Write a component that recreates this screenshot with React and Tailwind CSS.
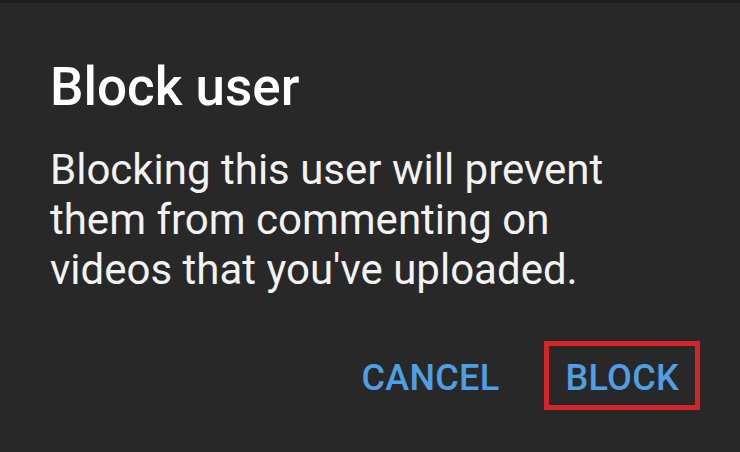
export default function App() {
    return (
        <div className="w-[740px] h-[452px] bg-[#282828] border-t-[3px] border-[#1c1c1c] overflow-hidden font-['Roboto',sans-serif] text-white">
            <div className="pl-[50px] pt-[54px]">
                <h1 className="text-[53px] leading-[60px] font-medium">Block user</h1>
                <p className="mt-[28px] text-[42px] leading-[50px] text-[#f2f2f2] whitespace-nowrap">
                    Blocking this user will prevent
                    <br />
                    them from commenting on
                    <br />
                    videos that you've uploaded.
                </p>
            </div>
            <div className="flex justify-end items-center pr-[40px] mt-[46px] gap-[45px]">
                <button className="text-[36px] font-medium text-[#4f9fe4] tracking-[0.3px] mt-[4px]">CANCEL</button>
                <button className="border-[5px] border-[#d6242b] px-[16px] h-[69px] pt-[4px] text-[36px] font-medium text-[#4f9fe4] tracking-[0.3px]">
                    BLOCK
                </button>
            </div>
        </div>
    );
}
